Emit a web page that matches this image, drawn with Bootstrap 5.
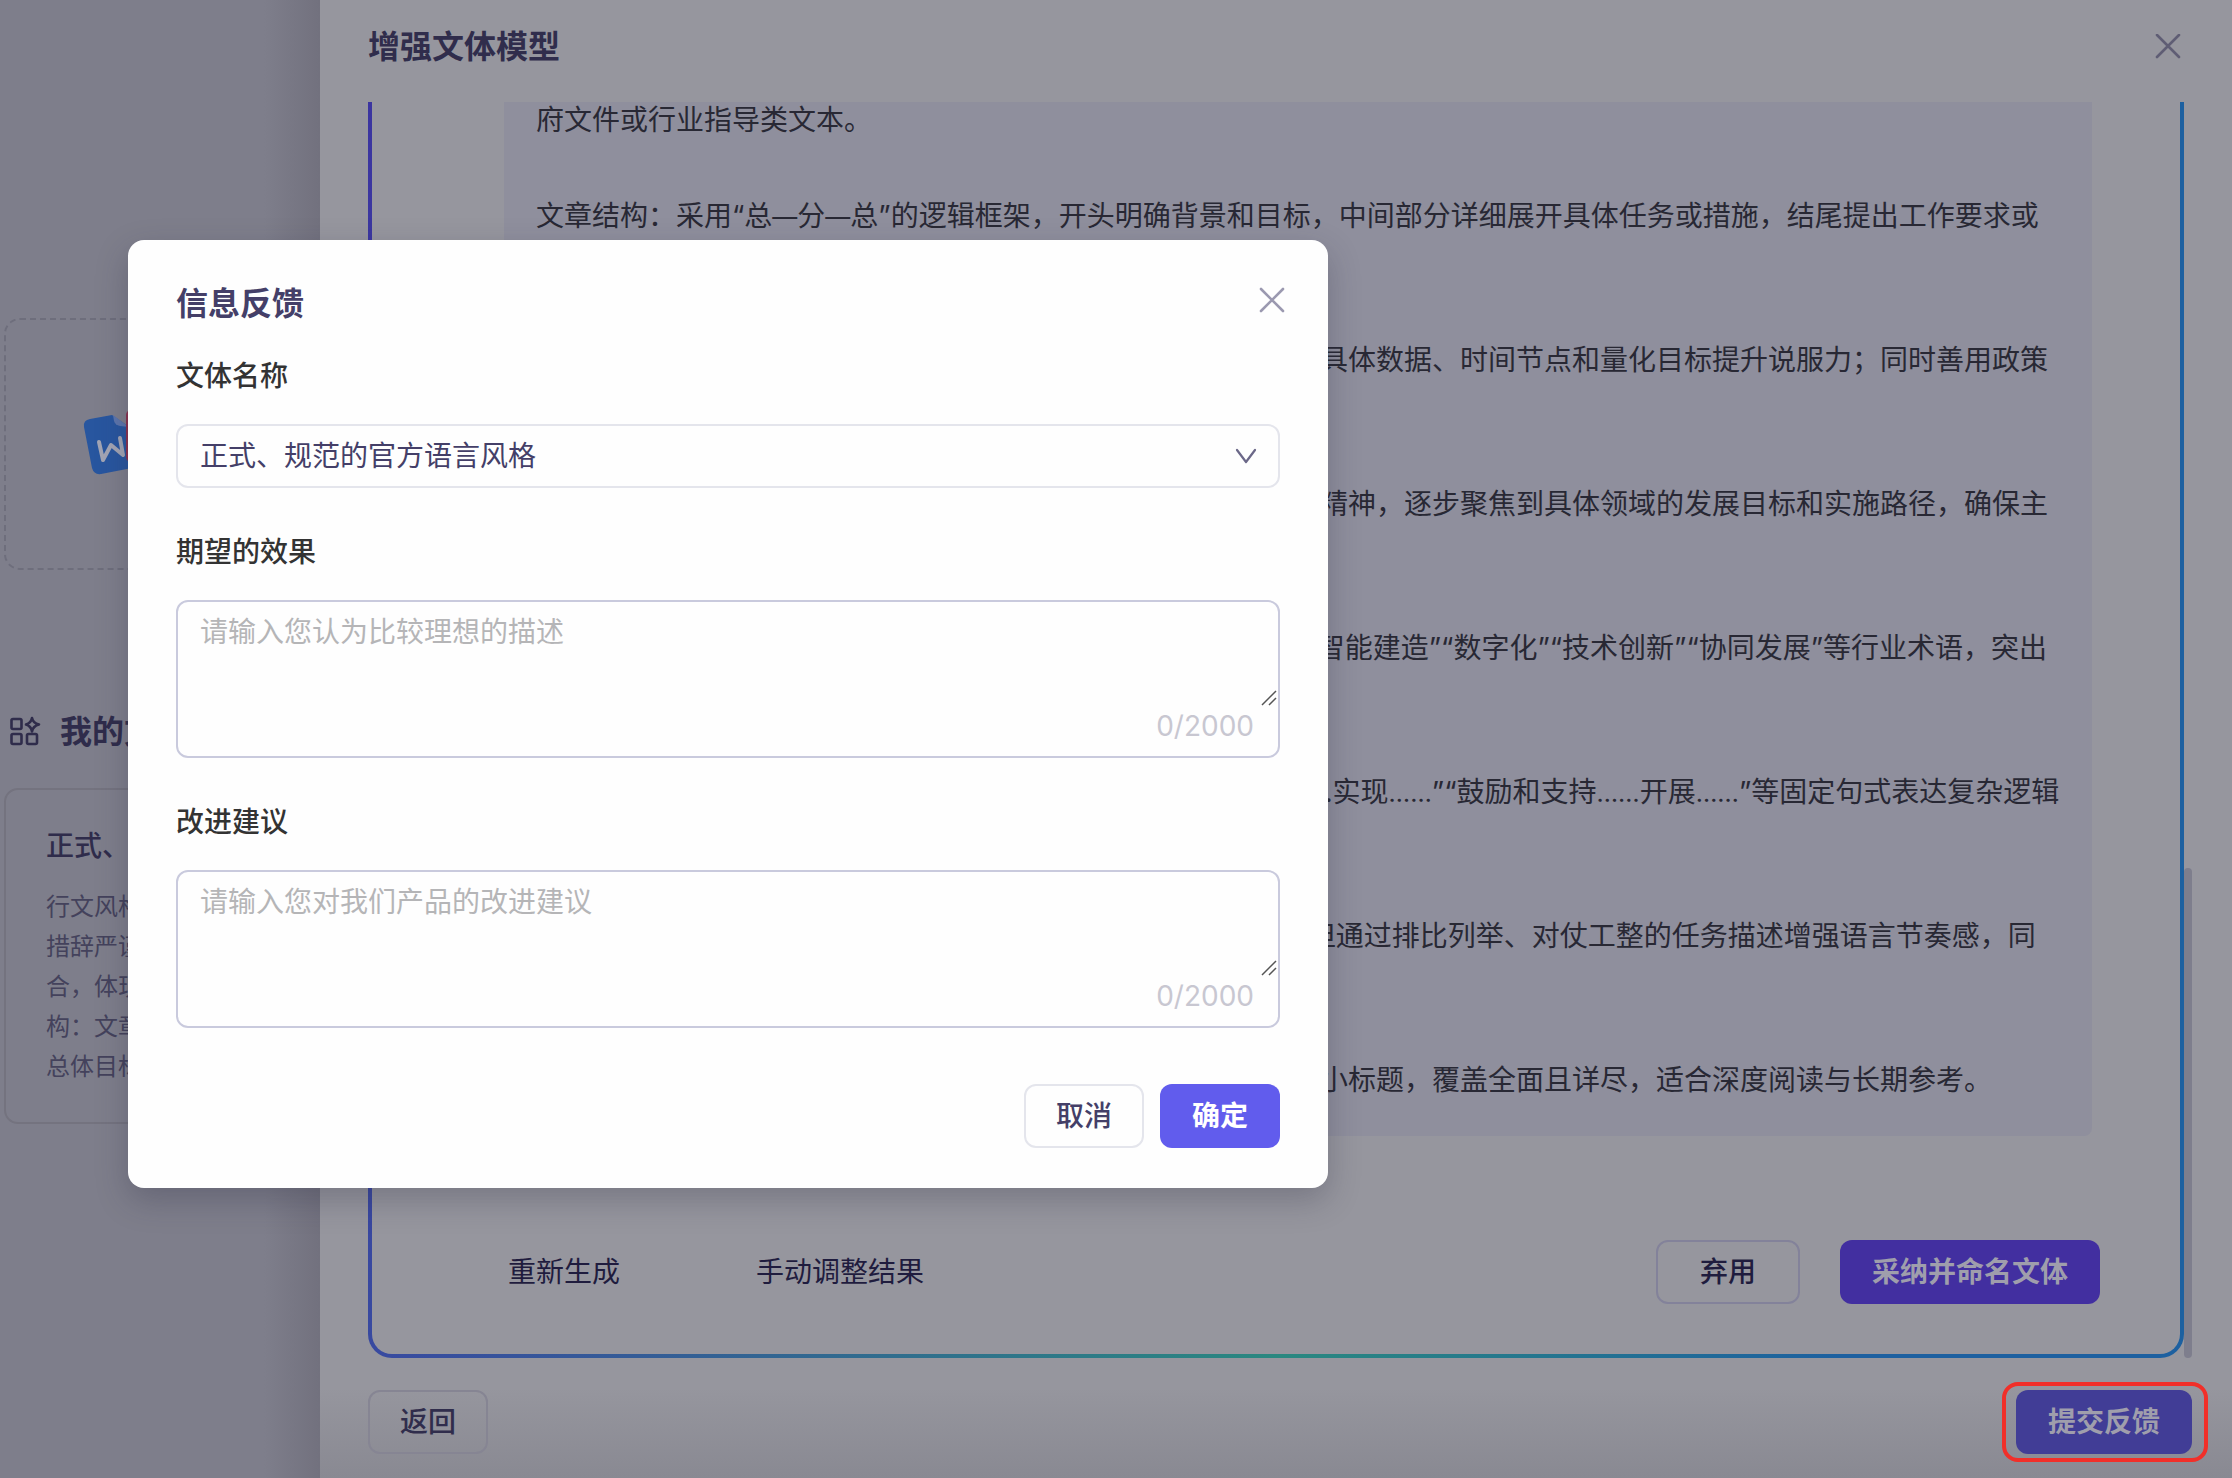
<!DOCTYPE html>
<html lang="zh-CN">
<head>
<meta charset="utf-8">
<meta name="viewport" content="width=device-width, initial-scale=1">
<title>增强文体模型</title>
<link rel="stylesheet" href="https://cdn.jsdelivr.net/npm/bootstrap@5.3.0/dist/css/bootstrap.min.css">
<style>
  body { font-family: Inter, "Noto Sans CJK SC", sans-serif; font-size: 28px; line-height: 48px; color: #26263a; background: #7e7e8b; }
  .shell { height: 100vh; }
  .page-side { width: 320px; padding: 318px 0 0 4px; background: linear-gradient(to left, #72717e 0, #7e7e8b 56px); }
  .page-side > * { width: 480px; }
  .drop-zone { height: 252px; padding-left: 76px; border: 2px dashed #6e6e7c; border-radius: 16px; }
  .side-title { margin: 138px 0 32px; padding-left: 4px; gap: 18px; font-size: 32px; font-weight: 700; line-height: 48px; color: #2f2c4b; }
  .style-card { height: 336px; padding: 32px 40px; border: 2px solid #74737f; border-radius: 14px; font-size: 24px; line-height: 40px; color: #44425c; }
  .style-card h3 { margin: 0 0 17px; font-size: 28px; font-weight: 500; line-height: 48px; color: #2f2c4b; }
  .drawer { background: linear-gradient(to bottom, #96969e calc(100% - 90px), #898992); }
  .drawer-head { height: 102px; padding: 0 51px 8px 48px; }
  .drawer-head h1 { margin: 0; font-size: 32px; font-weight: 700; line-height: 48px; color: #302d4c; }
  .icon-btn { display: flex; padding: 0; border: 0; background: none; }
  .modal-x { margin: 7px -5px 0 0; }
  .scroll-area { min-height: 0; padding: 0 40px 0 48px; }
  .frame { min-width: 0; padding: 0 88px 50px 132px; border: 4px solid transparent; border-top: 0; border-radius: 0 0 24px 24px;
    background: linear-gradient(#96969e, #96969e) padding-box,
      linear-gradient(105deg, #3b34a0 0, #384aa0 16%, #2a8880 58%, #1d60a0 84%, #1d60a0 100%) border-box; }
  .track { width: 8px; }
  .thumb { height: 39%; border-radius: 4px; background: #7e7e8d; }
  .result { padding: 0 32px 32px; background: #8f8f9d; border-radius: 0 0 8px 8px; white-space: nowrap; color: #282834; }
  .result p { margin: 0 0 48px; }
  .result p:last-child { margin: 0; }
  .result i { font-style: normal; font-size: 25px; line-height: 1; }
  .frame-foot { margin: 104px -8px 0 4px; }
  .ui-btn { height: 64px; padding: 0 30px; border: 2px solid transparent; border-radius: 12px; font-size: 28px; font-weight: 500; line-height: 48px; }
  .btn-plain { padding: 0; border: 0; font-weight: 400; color: #1f1c3e; }
  .btn-plain + .btn-plain { margin-left: 136px; }
  .btn-drop { padding: 0 42px; border-color: #83829a; color: #1f1c3e; }
  .btn-adopt { margin-left: 40px; background: #422fa0; color: #9f9eac; font-weight: 700; }
  .btn-back { border-color: #868593; color: #302d4c; }
  .btn-submit { background: #413d96; color: #9f9eac; font-weight: 700; }
  .drawer-foot { padding: 24px 24px 16px 48px; }
  .marker { padding: 4px 12px 4px 10px; border: 4px solid #f12f29; border-radius: 16px; }
  .feedback { margin: 240px 0 0 128px; width: 1200px; max-width: none; }
  .feedback .modal-content { padding: 40px 48px; border: 0; border-radius: 16px; background: #fefefe; box-shadow: 0 12px 32px rgba(40, 38, 60, .28); }
  .feedback h2 { margin: 0; font-size: 32px; font-weight: 700; line-height: 48px; color: #443f68; }
  .field { margin-bottom: 40px; }
  .field label { display: block; margin-bottom: 24px; font-weight: 500; color: #333; }
  .pick { height: 64px; padding: 0 64px 0 22px; border: 2px solid #e4e5ec; border-radius: 12px; background: none; font-size: 28px; color: #443f68; }
  .pick-arrow { right: 23px; top: 24px; pointer-events: none; }
  .note-box { border: 2px solid #c9cadd; border-radius: 12px; padding-bottom: 10px; }
  .note-box textarea { display: block; height: 104px; padding: 8px 22px; border: 0; background: none; font-size: 28px; line-height: 44px; resize: none; }
  .note-box textarea::placeholder { color: #b5b5b7; }
  .counter { padding-right: 24px; line-height: 40px; text-align: right; color: #c8c7d1; }
  .grip { right: 1px; top: 88px; pointer-events: none; }
  .actions { margin-top: 16px; gap: 16px; }
  .btn-cancel { border-color: #e4e5ec; color: #443f68; }
  .btn-ok { background: #615ced; color: #fff; font-weight: 700; }
</style>
</head>
<body>
<div class="shell d-flex overflow-hidden position-relative">
  <aside class="page-side flex-shrink-0 overflow-hidden">
    <div class="drop-zone d-flex align-items-center">
      <svg width="84" height="68" viewBox="0 0 84 68">
        <path d="M8 9 L30 5 L46 16 L54 54 Q54 57 50 58 L19 64 Q12 65 10 58 L2 17 Q1 10 8 9Z" fill="#28569f"/>
        <path d="M31 5 L47 17 L38 16 Q33 15 32 11Z" fill="#5d76ad"/>
        <path d="M17 32 L21 50 L29 35 L41 45 L38 28" fill="none" stroke="#a3a5b4" stroke-width="4" stroke-linecap="round" stroke-linejoin="round"/>
        <rect x="44" y="0" width="38" height="52" rx="5" fill="#8a3250"/>
      </svg>
    </div>
    <div class="side-title d-flex align-items-center">
      <svg width="34" height="32" viewBox="0 0 34 32" fill="none" stroke="#2f2c4b" stroke-width="2.6">
        <rect x="3.500" y="3" width="10" height="10" rx="1.500"/>
        <rect x="3.500" y="18" width="10" height="10" rx="1.500"/>
        <rect x="19" y="18" width="10" height="10" rx="1.500"/>
        <path d="M24 2 Q25 7 31 8.500 Q25 10 24 15.500 Q23 10 18 8.500 Q23 7 24 2Z" stroke-linejoin="round"/>
      </svg>
      <span>我的文体</span>
    </div>
    <div class="style-card text-nowrap">
      <h3>正式、规范风格</h3>
      行文风格：正式、规范<br>措辞严谨，逻辑清晰<br>合，体现政策导向结<br>构：文章开头明确其<br>总体目标和具体任务
    </div>
  </aside>

  <main class="drawer d-flex flex-column flex-grow-1">
    <header class="drawer-head d-flex flex-shrink-0 align-items-center justify-content-between">
      <h1>增强文体模型</h1>
      <button class="icon-btn" type="button" aria-label="关闭">
        <svg width="26" height="26" viewBox="0 0 26 26" stroke="#5f5d74" stroke-width="2.600" stroke-linecap="round"><path d="M2 1L24 23M24 1L2 23"/></svg>
      </button>
    </header>

    <div class="scroll-area d-flex flex-grow-1">
      <section class="frame d-flex flex-column justify-content-end flex-grow-1 overflow-hidden">
        <div class="result">
          <p>府文件或行业指导类文本。</p>
          <p>文章结构：采用“总<i>—</i>分<i>—</i>总”的逻辑框架，开头明确背景和目标，中间部分详细展开具体任务或措施，结尾提出工作要求或<br>未来展望，层次清晰、条理分明。</p>
          <p>说服策略：在文本中大量引用权威政策文件与规划内容，并结合具体数据、时间节点和量化目标提升说服力；同时善用政策<br>依据增强权威性。</p>
          <p>主题展开：从宏观政策背景切入，先阐明国家战略部署与会议的精神，逐步聚焦到具体领域的发展目标和实施路径，确保主<br>题明确、重点突出。</p>
          <p>用词特点： 专业术语密集， 在各段落中频繁使用“高质量发展”“智能建造”“数字化”“技术创新”“协同发展”等行业术语，突出<br>专业性和政策性。</p>
          <p>句式特点： 以长句和并列句式为主，结构较严整，常用“通过……实现<i>……</i>”“鼓励和支持<i>……</i>开展<i>……</i>”等固定句式表达复杂逻辑<br>关系。</p>
          <p>修辞手法： 较少使用比喻、夸张等文学性修辞， 整体偏平实，但通过排比列举、对仗工整的任务描述增强语言节奏感，同<br>时保持客观严肃。</p>
          <p>篇幅特点：全文篇幅相对较长，内容划分为多部分，每部分下设小标题，覆盖全面且详尽，适合深度阅读与长期参考。</p>
        </div>
        <div class="frame-foot d-flex align-items-center">
          <button class="btn ui-btn btn-plain" type="button">重新生成</button>
          <button class="btn ui-btn btn-plain" type="button">手动调整结果</button>
          <button class="btn ui-btn btn-drop ms-auto" type="button">弃用</button>
          <button class="btn ui-btn btn-adopt" type="button">采纳并命名文体</button>
        </div>
      </section>
      <div class="track d-flex flex-column justify-content-end"><div class="thumb"></div></div>
    </div>

    <footer class="drawer-foot d-flex align-items-center justify-content-between">
      <button class="btn ui-btn btn-back" type="button">返回</button>
      <div class="marker d-flex"><button class="btn ui-btn btn-submit" type="button">提交反馈</button></div>
    </footer>
  </main>

  <div class="modal d-block position-absolute overflow-hidden" role="dialog" aria-labelledby="fb-title">
    <div class="modal-dialog feedback">
      <form class="modal-content">
        <div class="d-flex justify-content-between mb-4">
          <h2 id="fb-title">信息反馈</h2>
          <button class="icon-btn modal-x align-self-start" type="button" aria-label="关闭">
            <svg width="26" height="26" viewBox="0 0 26 26" stroke="#9b99b0" stroke-width="2.600" stroke-linecap="round"><path d="M2 2L24 24M24 2L2 24"/></svg>
          </button>
        </div>
        <div class="field">
          <label for="fb-name">文体名称</label>
          <div class="position-relative">
            <select class="form-select pick" id="fb-name"><option>正式、规范的官方语言风格</option></select>
            <svg class="pick-arrow position-absolute" width="22" height="16" viewBox="0 0 22 16" fill="none" stroke="#6b6888" stroke-width="2.200" stroke-linecap="round" stroke-linejoin="round"><path d="M2 2L11 14L20 2"/></svg>
          </div>
        </div>
        <div class="field">
          <label for="fb-effect">期望的效果</label>
          <div class="note-box position-relative">
            <textarea class="form-control" id="fb-effect" placeholder="请输入您认为比较理想的描述"></textarea>
            <div class="counter">0/2000</div>
            <svg class="grip position-absolute" width="16" height="16" viewBox="0 0 16 16" stroke="#555" stroke-width="1.500"><path d="M1 15L15 1M8 15L15 8"/></svg>
          </div>
        </div>
        <div class="field">
          <label for="fb-advice">改进建议</label>
          <div class="note-box position-relative">
            <textarea class="form-control" id="fb-advice" placeholder="请输入您对我们产品的改进建议"></textarea>
            <div class="counter">0/2000</div>
            <svg class="grip position-absolute" width="16" height="16" viewBox="0 0 16 16" stroke="#555" stroke-width="1.500"><path d="M1 15L15 1M8 15L15 8"/></svg>
          </div>
        </div>
        <div class="actions d-flex justify-content-end">
          <button class="btn ui-btn btn-cancel" type="button">取消</button>
          <button class="btn ui-btn btn-ok" type="submit">确定</button>
        </div>
      </form>
    </div>
  </div>
</div>
<script src="https://cdn.jsdelivr.net/npm/bootstrap@5.3.0/dist/js/bootstrap.bundle.min.js"></script>
</body>
</html>
